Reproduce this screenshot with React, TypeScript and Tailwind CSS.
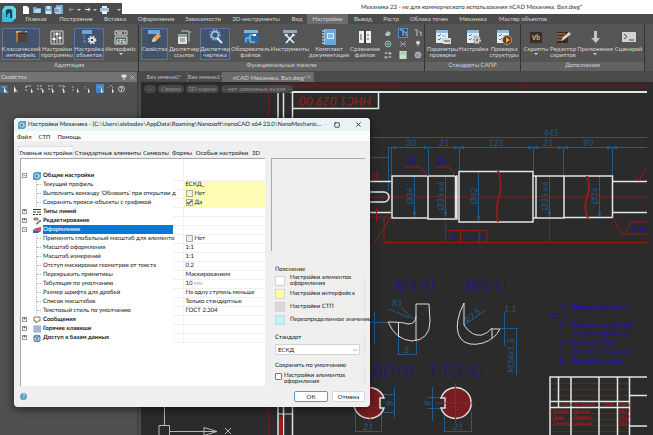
import { useState, type ReactNode } from "react";
import { Check, ChevronDown, Minus, Square, X } from "lucide-react";

const ribbonTabs: [string, string][] = [
  ["Главная", "w-[34px]"],
  ["Построение", "w-[46px]"],
  ["Вставка", "w-[32px]"],
  ["Оформление", "w-[50px]"],
  ["Зависимости", "w-[44px]"],
  ["3D-инструменты", "w-[62px]"],
  ["Вид", "w-[20px]"],
  ["Настройки", "w-[41px]"],
  ["Вывод", "w-[30px]"],
  ["Растр", "w-[26px]"],
  ["Облака точек", "w-[50px]"],
  ["Механика", "w-[38px]"],
  ["Мастер объектов", "w-[62px]"],
];

function Icon({ children }: { children: ReactNode }) {
  return (
    <svg viewBox="0 0 16 16" className="size-4 shrink-0" fill="none" aria-hidden="true">
      {children}
    </svg>
  );
}

const gear = (cx: number, cy: number, r: number, color: string) => (
  <>
    <circle cx={cx} cy={cy} r={r} stroke={color} strokeWidth="1.8" />
    <circle cx={cx} cy={cy} r={r + 1.5} stroke={color} strokeWidth="1.3" strokeDasharray="1.5 1.5" />
  </>
);

const checklist = (
  <>
    <path d="M1 1h12v13H1z" fill="#e4eaee" />
    <path d="M1 1h12v3H1z" fill="#8bbbe0" />
    <path d="M3 6l1 1 2-2M3 10l1 1 2-2" stroke="#3183bd" />
    <path d="M7 7h4M7 11h4" stroke="#9aa" />
  </>
);

const icons: Record<string, ReactNode> = {
  classic: (
    <>
      <path d="M3 2h11v11H3z" fill="#4f4339" />
      <path d="M3 2h11v2H3z" fill="#e3a469" />
      <path d="M3 4h2v9H3z" fill="#a87746" />
      <path d="M5 4h9M9 2v2M11 2v2" stroke="#2b2826" />
    </>
  ),
  sliders: (
    <>
      <path d="M2 2h12v13H2z" stroke="#d6d6d6" />
      <path d="M5 3v11M8 3v11M11 3v11" stroke="#e2e2e2" />
      <path d="M3.500 10h3M6.500 5h3M9.500 9h3" stroke="#fff" strokeWidth="2" />
    </>
  ),
  objects: (
    <>
      <path d="M1 1h10v4H1z" fill="#6fa5d8" />
      <path d="M3 6v7h3" stroke="#77aede" strokeDasharray="1.500 1" />
      {gear(11, 11, 2.2, "#e5e5e5")}
    </>
  ),
  cfg: (
    <>
      <path d="M2 2h12v4H2zM2 8h12v7H2z" stroke="#dedede" />
      <path d="M4 4h5M11 4h1" stroke="#fff" />
      <text x="8" y="14" textAnchor="middle" fontSize="5" fontWeight="bold" fill="#fff" fontFamily="Roboto, sans-serif">CFG</text>
    </>
  ),
  props: (
    <>
      <path d="M1 1h12v4H1z" fill="#6ea7dc" />
      <path d="M2 6v8h10V6" stroke="#35506f" />
      <path d="M5 13l1-4 5-5 3 3-5 5z" fill="#e7a25f" />
      <path d="M5 13l1-4 3 3z" fill="#f7d5a5" />
    </>
  ),
  links: (
    <>
      <path d="M2 5h9v10H2z" fill="#e2e3e0" />
      <path d="M5 2h8v11" stroke="#c3c7c4" />
      <path d="M2 5h9v3H2z" fill="#8fa7a0" />
      <path d="M4 10h5M4 12h5" stroke="#70797c" />
      <path d="M12 3h3" stroke="#76a879" strokeWidth="2" />
    </>
  ),
  manager: (
    <>
      {gear(8, 6, 3.5, "#8ac2f1")}
      <path d="M10 9l5 5" stroke="#d9eeff" strokeWidth="2" />
    </>
  ),
  explorer: (
    <>
      <path d="M1 1h14v14H1z" fill="#2b6ba3" />
      <path d="M1 1h14v3H1z" fill="#85b6d9" />
      <path d="M3 13V9h4V6h5M7 9v4h5" stroke="#a7d7f4" />
      <path d="M10 5h3v2h-3z" fill="#fff" />
    </>
  ),
  tools: (
    <>
      <path d="M1 1h14v14H1z" fill="#4b5863" />
      <path d="M1 1h14v3H1z" fill="#9aaab6" />
      <path d="M3 5l9 9M12 5l-8 9" stroke="#f2f2f2" strokeWidth="1.600" />
      <path d="M10 5l3 2M3 7l3-2" stroke="#f2f2f2" />
    </>
  ),
  docs: (
    <>
      <path d="M3 0h12v16H3z" fill="#66a9e0" />
      <path d="M6 4h7v6H6z" fill="#d8ebfa" />
      <path d="M7 6h5M7 8h5" stroke="#397db5" />
      <path d="M1 2h3M1 5h3M1 8h3M1 11h3M1 14h3" stroke="#f1f1f1" />
    </>
  ),
  compare: (
    <>
      <path d="M2 2h5v12H2zM9 2h5v12H9z" fill="#eee" />
      <path d="M4 5v6M11 5v2M11 9v2" stroke="#555" />
      <path d="M8 1v14" stroke="#292929" />
    </>
  ),
  params: (
    <>
      {checklist}
      <path d="M8 9h8v6H8z" fill="#dadada" />
      <path d="M9 12h6" stroke="#555" />
    </>
  ),
  check: (
    <>
      {checklist}
      <circle cx="11" cy="11" r="3.500" fill="#5b5e61" />
      {gear(11, 11, 2, "#c8cbce")}
    </>
  ),
  verify: (
    <>
      {checklist}
      <circle cx="11" cy="11" r="4.500" fill="#4b3b31" stroke="#e69251" />
      <path d="M10 8l4 3-4 3z" fill="#f4a45e" />
    </>
  ),
  vb: (
    <>
      <path d="M2 3h12v11H2z" fill="#382f27" />
      <text x="8" y="11" textAnchor="middle" fontSize="7" fontWeight="bold" fill="#d5a86a" fontFamily="Roboto, sans-serif">Vb</text>
    </>
  ),
  editor: (
    <>
      <path d="M2 3h11v11H2z" fill="#3a2d25" />
      <path d="M2 5h8M2 8h7M2 11h6" stroke="#bb8b60" />
      <path d="M6 12l2-4 6-5 2 2-6 5z" fill="#e9cfbb" />
    </>
  ),
  apps: <path d="M7 2h3v7h3l-4 5-5-5h3z" fill="#c6c6c6" />,
  console: (
    <>
      <path d="M1 3h14v10H1z" fill="#d1d1d1" />
      <path d="M3 5l3 2.500L3 10M8 11h5" stroke="#444" />
    </>
  ),
};

type Tool = { icon: string; label: string[]; width: string; active?: boolean; menu?: boolean };

const adaptation: Tool[] = [
  { icon: "classic", label: ["Классический", "интерфейс"], width: "w-[38px]", active: true },
  { icon: "sliders", label: ["Настройки", "программы"], width: "w-[34px]" },
  { icon: "objects", label: ["Настройка", "объектов"], width: "w-[30px]", active: true },
  { icon: "cfg", label: ["Интерфейс"], width: "w-[33px]", menu: true },
];
const panels: Tool[] = [
  { icon: "props", label: ["Свойства"], width: "w-[27px]", active: true },
  { icon: "links", label: ["Диспетчер", "ссылок"], width: "w-[32px]" },
  { icon: "manager", label: ["Диспетчер", "чертежа"], width: "w-[30px]", active: true },
  { icon: "explorer", label: ["Обозреватель", "файлов"], width: "w-[41px]" },
  { icon: "tools", label: ["Инструменты"], width: "w-[38px]" },
  { icon: "docs", label: ["Комплект", "документации"], width: "w-[40px]" },
  { icon: "compare", label: ["Сравнение", "файлов"], width: "w-[32px]" },
];
const standards: Tool[] = [
  { icon: "params", label: ["Параметры", "проверки"], width: "w-[31px]" },
  { icon: "check", label: ["Настройка"], width: "w-[31px]" },
  { icon: "verify", label: ["Проверка", "структуры"], width: "w-[30px]" },
];
const addons: Tool[] = [
  { icon: "vb", label: ["Скрипты"], width: "w-[26px]", menu: true },
  { icon: "editor", label: ["Редактор", "скриптов"], width: "w-[28px]" },
  { icon: "apps", label: ["Приложения"], width: "w-[36px]", menu: true },
  { icon: "console", label: ["Сценарий"], width: "w-[31px]" },
];

function ToolButton({ tool }: { tool: Tool }) {
  return (
    <button
      className={`flex h-8 shrink-0 flex-col items-center border text-[6px] leading-[6px] whitespace-nowrap ${tool.width} ${
        tool.active ? "border-[#5877a0] bg-[#43536b]" : "border-transparent"
      }`}
    >
      <Icon>{icons[tool.icon]}</Icon>
      <span className="mt-px flex flex-col items-center">
        {tool.label.map((line) => (
          <span key={line}>{line}</span>
        ))}
        {tool.menu && <span className="mt-px border-x-2 border-t-2 border-x-transparent border-t-[#d6d6d6]" />}
      </span>
    </button>
  );
}

function Group({ tools, title, width, children }: { tools: Tool[]; title: string; width: string; children?: ReactNode }) {
  return (
    <section className={`flex shrink-0 flex-col border-r border-[#343434] ${width}`}>
      <div className="flex h-[38px] items-start pt-1 pl-0.5">
        {tools.map((t) => (
          <ToolButton key={t.icon} tool={t} />
        ))}
        {children}
      </div>
      <h2 className="h-[9px] bg-[#626262] text-center text-[6px] leading-[8px]">{title}</h2>
    </section>
  );
}

const smallTools: ReactNode[] = [
  <path key="a" d="M1 5l3-3 3 2-2 3H2z" fill="#bebebe" />,
  <path key="b" d="M1 1h3v6M4 3h3v4" stroke="#8bc6f4" />,
  <path key="c" d="M1 1h3M3 2v5M5 3h2v4" stroke="#ccc" />,
  <path key="d" d="M1 4a3 3 0 106 0 3 3 0 10-6 0M4 1v6M1 4h6" stroke="#87b6a6" />,
  <path key="e" d="M1 7l6-6M1 1l6 6M1 4h6" stroke="#a48aaa" />,
  <path key="f" d="M2 3a2 2 0 114 0L4 5zM4 5v2" fill="#e5d7aa" stroke="#ccc" strokeWidth=".5" />,
  <path key="g" d="M1 3l1-2 1 2M5 1v2h2V2H5M1 5v2h2V5M5 5l1 2 1-2" stroke="#ddd" strokeWidth=".7" />,
  <path key="h" d="M1 0h6v8H1zM2 6l2-3 2 3z" fill="#9cc8aa" stroke="#e5eee7" />,
  <path key="i" d="M1 4a3 3 0 106 0 3 3 0 10-6 0M3 3h2v2" fill="#969696" stroke="#ccc" strokeWidth=".7" />,
];

function NanoLogo() {
  return (
    <svg viewBox="0 0 14 16" className="h-4 w-3.5 shrink-0" aria-hidden="true">
      <path d="M3 0h8l3 3v9l-4 4H0V4z" fill="#35bddd" />
      <path d="M3 0h8l3 3v9l-3 2V3H4L1 7V4z" fill="#68d6e6" />
      <path d="M4 11V6a3 3 0 016 0v6H8V6L5 9v2z" fill="#173f58" />
    </svg>
  );
}

function SettingsGlyph() {
  return (
    <svg viewBox="0 0 8 8" className="size-2 shrink-0" fill="none" aria-hidden="true">
      <path d="M2 0h6v6L6 8H0V2z" fill="#4fa3c6" />
      <circle cx="4" cy="4" r="2" fill="#2d7296" stroke="#e3f5fb" strokeWidth=".9" />
      <path d="M4 4h3" stroke="#e3f5fb" strokeWidth=".7" />
    </svg>
  );
}

function QuickAccess() {
  return (
    <svg viewBox="0 0 102 11" className="h-[11px] w-[102px]" fill="none" aria-hidden="true">
      <path d="M4 3h4l2 2v6H4z" fill="#fff" />
      <path d="M14 4h3l1 1h4v5h-8z" fill="#6fa6d8" />
      <path d="M16 6h6l-1 4h-6z" fill="#b2d4ee" />
      <path d="M26 3h7v8h-7z" fill="#7aa3ca" />
      <path d="M28 3h3v3h-3zM27 8h5v3h-5z" fill="#d3e5f1" />
      <path d="M37 2h7v9h-7z" fill="#73a3d0" />
      <path d="M36 5h5v5h-5zM39 6l3-3" stroke="#e0e7ed" />
      <path d="M55 6.500h-5m2-2l-2 2 2 2" stroke="#8797a5" />
      <path d="M58 6h4l-2 2zM74 6h4l-2 2zM98 6h4l-2 2z" fill="#c9c9c9" />
      <path d="M66 6.500h5m-2-2l2 2-2 2" stroke="#e5e5e5" />
      <path d="M81 5h9v4h-9z" fill="#9fc3e0" />
      <path d="M83 3h5v2h-5zM83 8h5v3h-5z" fill="#eee" />
    </svg>
  );
}

function PropertyTools() {
  return (
    <svg viewBox="0 0 136 12" className="h-3 w-[136px]" fill="none" aria-hidden="true">
      <path d="M0 2h8v8H0z" fill="#47698b" />
      <path d="M96 1h8v9h-8z" fill="#4b83ca" />
      <path d="M2 4h4M26 3h6M26 3v6M37 3h6M37 6h5M48 3h6M48 6h4M59 3h6l-3 4" stroke="#b5c9dc" strokeDasharray="2 1" />
      <path d="M73 3v5M84 3l3 3M98 4h4M108 5l3-3 2 3" stroke="#9aa8b4" strokeDasharray="2 1" />
      <path d="M4 4v6l2-1 2 2zM14 3v7l2-2 2 2zM31 5v5l2-1 1 2zM42 5v5l2-1zM52 5v5l2-1zM63 5v5l2-1zM77 5v5l2-1zM88 5v5l2-1zM101 4v6l2-1zM112 5v5l2-1z" fill="#e0e6ec" />
      <circle cx="121.500" cy="6" r="3" stroke="#bbb" />
      <path d="M120 5q1.500-2 3 0l-1.500 1v2" stroke="#ccc" />
    </svg>
  );
}

const blue = "#205b8c";
const navy = "#26168b";
const red = "#951b1d";

function Drawing() {
  return (
    <svg viewBox="141 82 512 353" className="block h-[353px] w-[512px]" fill="none" fontFamily="Lato, sans-serif" role="img" aria-label="Чертёж вала">
      <path d="M270 85.500H647" stroke="#482323" strokeWidth="5" />
      <path d="M268.500 435V86H397M526 83v9" stroke="#701e20" />
      <g stroke="#e4e4e4">
        <path d="M277 92H647" strokeWidth="2" />
        <path d="M278 92V435M283.500 92V435M292.500 92V435M292 108.500H378.500V92" strokeWidth="1.500" />
      </g>
      <text x="335" y="97" transform="rotate(180 335 97)" textAnchor="middle" fontSize="12" fontStyle="italic" fill="#a61d20">ННС1 029 00</text>
      <path d="M279 417h4v18h-4z" fill="#a11c20" />
      <path d="M278 414h14" stroke="#ddd" />

      <g stroke={blue}>
        <path d="M370 137.500H647M387 147.500H647M370 157.500H389" />
        <path d="M388.500 147v43M391.500 147v28M428.500 147v28M459.500 147v24M533.500 147v24M563.500 147v28M612.500 147v28" />
        <path d="M414.500 176v41M445.500 176v41M478.500 172v49M549.500 176v42M599.500 176v41" />
      </g>
      <path
        d="M392 147.500l4-1v2zM428 147.500l-4-1v2zM459 147.500l-5-1v2zM459 147.500l5-1v2zM533 147.500l-5-1v2zM533 147.500l5-1v2zM563 147.500l-5-1v2zM563 147.500l5-1v2zM612 147.500l-5-1v2zM612 147.500l5-1v2zM414.500 217l-1-5h2zM445.500 217l-1-5h2zM478.500 221l-1-5h2zM549.500 217l-1-5h2zM599.500 217l-1-5h2z"
        fill={blue}
        stroke={blue}
      />
      <g fill={blue} fontSize="9" fontStyle="italic" textAnchor="middle">
        <text x="551" y="136">445</text>
        <text x="411" y="146">30</text>
        <text x="444" y="146">25</text>
        <text x="496" y="146">125</text>
        <text x="548" y="146">25</text>
        <text x="588" y="146">90</text>
        <text transform="translate(413 196) rotate(-90)">Ø34</text>
        <text transform="translate(444 196) rotate(-90)">Ø35 к6</text>
        <text transform="translate(477 196) rotate(-90)">Ø42</text>
        <text transform="translate(548 196) rotate(-90)">Ø35 к6</text>
        <text transform="translate(598 196) rotate(-90)">Ø34</text>
      </g>

      <path d="M370 197H648" stroke="#811f21" />
      <g stroke="#e5e5e5" strokeWidth="1.500">
        <path d="M370 181.500h21M370 212.500h21M370 192h14a5 5 0 010 10h-14" />
        <path d="M392 176h36v42h-36zM428 176h29v43h-29zM459 171.500h74V222h-74zM455.500 175v43M536 176h28v42h-28zM564 176h48.500v41.500H564zM533 176h3M533 218h3M612 181.500h35M612 212.500h35" />
      </g>
      <path d="M498 171q5 13 1 26t-1 25M587 176q4 10 0 21t1 21" stroke={red} strokeWidth="2" />
      <g stroke={red}>
        <path d="M373 172v8m4-8v8m-5-4h7M376.500 208v14M370 217h21L371 248M384 217v25.500H647M445.500 220v22M549.500 220v22M447 230.500h40v12M460.500 231v11M479.500 231v11M613 217l8 17h26M625 234l6-12h16M404 167h16l8 9M436 167h13l7 9M635 177l4 4 7-14" />
      </g>
      <g fill={navy} fontStyle="italic">
        <text x="407" y="165" fontSize="13" fontWeight="bold">А</text>
        <text x="437" y="165" fontSize="13" fontWeight="bold">А</text>
        <text x="450" y="240" fontSize="8" fontWeight="bold">Ø</text>
        <text x="463" y="240" fontSize="7" fontWeight="bold">0,01</text>
        <text x="481" y="240" fontSize="8" fontWeight="bold">Б</text>
        <text x="631" y="231" fontSize="7" fontWeight="bold">Rz40</text>
        <text x="394" y="292" fontSize="16">Б(5:1)</text>
        <text x="465" y="292" fontSize="16">В(5:1)</text>
        <text x="371" y="376" fontSize="16">Д(1:1)</text>
        <text x="430" y="376" fontSize="16">Г-Г(1:1)</text>
      </g>

      <g stroke={blue}>
        <path d="M374.500 312v32M370 322.500h18M389 309l21 9M401 308l14 12M398.500 337v18M416.500 340v15M397 354.500h20M464 325l22-15M500 328.500h18M504.500 312v34M516.500 329v46M394.500 387v31M383 394.500h12M383 412.500h12M432.500 387v34M427 397.500h15M427 408.500h15M444.500 412v20M471.500 412v20M444 431.500h28M355.500 407v25M381.500 412v20M355 431.500h27" />
      </g>
      <g fill={blue} fontStyle="italic" fontSize="9">
        <text x="392" y="306">R1</text>
        <text x="404" y="353">3</text>
        <text transform="translate(468 324) rotate(-40)">R2,5</text>
        <text x="504" y="312">1,1</text>
        <text transform="translate(514 373) rotate(-90)">M36x1,5</text>
        <text transform="translate(393 406) rotate(-90)">8</text>
        <text transform="translate(431 406) rotate(-90)">8</text>
        <text x="453" y="430">21</text>
        <text x="363" y="430">21</text>
      </g>
      <g stroke="#dedede">
        <path d="M388 322q8 18 24 19 18-1 18-20l-1-17h-13v37M388 322q15 0 20 2 8 0 8-8M398.500 323v14" />
        <path d="M464 303l-4 9q-6 18 1 27 7 8 22 4 12-4 17-14h-8v9M464 303v22q8 12 18 10 6-2 10-7" />
      </g>
      <defs>
        <pattern id="hatch" width="3" height="3" patternUnits="userSpaceOnUse">
          <path d="M0 0h3v3H0z" fill="#641b1f" />
          <path d="M0 3L3 0" stroke="#a22125" />
        </pattern>
      </defs>
      <path d="M384 398a15.500 15.500 0 10 0 10h-4v-10z" fill="url(#hatch)" stroke="#ddd" strokeWidth="1.500" />
      <path d="M441 398a15.500 15.500 0 11 0 10h4v-10z" fill="url(#hatch)" stroke="#ddd" strokeWidth="1.500" />
      <path d="M455.500 383v40M436 403h38M370 383v40" stroke="#8d272a" />

      <g fill="#2412a0" fontSize="7" fontStyle="italic" fontWeight="bold">
        <text x="560" y="309">1.</text>
        <text x="571" y="309">Общие допуски по</text>
        <text x="547" y="318">ГОСТ</text>
        <text x="560" y="327">2.</text>
        <text x="571" y="327">Радиусы скруглений</text>
        <text x="560" y="336">3.</text>
        <text x="571" y="336">Острые кромки пр.</text>
        <text x="560" y="345">4.</text>
        <text x="571" y="345">H14, h14, IT14</text>
        <text x="560" y="354">5.</text>
        <text x="571" y="354">HB 230...260 кроме</text>
        <text x="560" y="363">6.</text>
        <text x="571" y="363">Термообработка</text>
      </g>
      <path d="M551 383.500h78M551 389.500h78M551 395.500h78M551 413.500h78M551 419.500h78M551 425.500h78M551 431.500h78" stroke="#741d20" />
      <path d="M550 435V377h97M558.500 377v30M571 377v58M599 377v58M617.500 377v58M629.500 377v58M550 401.500h79M550 407.500h79M629 395.500h18M629 426h18" stroke="#e5e5e5" strokeWidth="1.500" />
      <g fill="#b4161c" fontSize="5" fontStyle="italic" fontWeight="bold">
        <text x="560" y="406">Лист</text>
        <text x="574" y="406">№ докум.</text>
        <text x="602" y="406">Подп</text>
        <text x="618" y="406">Дата</text>
        <text x="552" y="413">Разраб.</text>
        <text x="573" y="413">Иванов</text>
        <text x="552" y="419">Пров.</text>
        <text x="573" y="419">Петров</text>
        <text x="552" y="425">Т.контр</text>
        <text x="573" y="425">Сидоров</text>
        <text x="618" y="413">2023</text>
        <text x="618" y="419">2023</text>
        <text x="618" y="425">2023</text>
      </g>
      <path d="M164.500 407v18M159 425.500h10.500V436H159zM170 431.500h47M204 427.500l13 4-13 4zM225 428l6 6M231 428l-6 6" stroke="#b9b9b9" />
    </svg>
  );
}

function Tick({ id, label, checked, white }: { id: string; label: string; checked?: boolean; white?: boolean }) {
  const [on, setOn] = useState(!!checked);
  return (
    <span className="flex items-start gap-0.5">
      <span className="grid shrink-0">
        <input
          id={id}
          type="checkbox"
          checked={on}
          onChange={() => setOn(!on)}
          className={`size-[7px] appearance-none border [grid-area:1/1] ${white ? "rounded-[1px] border-[#777] bg-white" : "border-[#aaa] bg-[#eee]"}`}
        />
        {on && <Check className="pointer-events-none size-[7px] text-[#555] [grid-area:1/1]" strokeWidth={4} />}
      </span>
      <label htmlFor={id}>{label}</label>
    </span>
  );
}

type Row = { text: string; icon?: string; open?: boolean; value?: ReactNode; yellow?: boolean; selected?: boolean };

const rows: Row[] = [
  { text: "Общие настройки", icon: "general", open: true },
  { text: "Текущий профиль", value: "ЕСКД_", yellow: true },
  { text: "Выполнить команду 'Обновить' при открытии д", value: <Tick id="refresh" label="Нет" />, yellow: true },
  { text: "Сохранять прокси-объекты с графикой", value: <Tick id="proxy" label="Да" checked />, yellow: true },
  { text: "Типы линий", icon: "lines" },
  { text: "Редактирование", icon: "edit" },
  { text: "Оформление", icon: "style", open: true, selected: true },
  { text: "Применять глобальный масштаб для элементо", value: <Tick id="global" label="Нет" /> },
  { text: "Масштаб оформления", value: "1:1" },
  { text: "Масштаб измерений", value: "1:1" },
  { text: "Отступ маскировки геометрии от текста", value: "0.2" },
  { text: "Перекрывать примитивы", value: "Маскированием" },
  { text: "Табуляция по умолчанию", value: <>10 <span className="text-[#aaa]">мм</span></> },
  { text: "Размер шрифта для дробей", value: "На одну ступень меньше" },
  { text: "Список масштабов", value: "Только стандартные" },
  { text: "Текстовый стиль по умолчанию", value: "ГОСТ 2.304" },
  { text: "Сообщения", icon: "messages" },
  { text: "Горячие клавиши", icon: "keys" },
  { text: "Доступ к базам данных", icon: "data" },
];

function TreeIcon({ name }: { name: string }) {
  if (name === "general") return <SettingsGlyph />;
  return (
    <svg viewBox="0 0 8 8" className="size-2 shrink-0" fill="none" aria-hidden="true">
      {name === "lines" && <path d="M0 1.500h8M0 4h3m1 0h4M0 6.500h2m1 0h2m1 0h2" stroke="#333" />}
      {name === "edit" && <path d="M1 1h4v2H1zM3 7l4-4 1 1-4 3z" fill="#c9b74a" stroke="#5a4a9a" strokeWidth=".7" />}
      {name === "style" && (
        <>
          <path d="M0 4l3-2 5-1v3L4 5z" fill="#d0505a" />
          <path d="M0 4l4 1 4-1v1L5 7H0z" fill="#3e5ba5" />
        </>
      )}
      {name === "messages" && <path d="M1 1h6v4H5L3 7V5H1z" fill="#fffbd2" stroke="#65604a" strokeWidth=".8" />}
      {name === "keys" && <path d="M1 1h7v6H1zM2 3h5M2 5h5" fill="#c3d5ed" stroke="#748daf" strokeWidth=".8" />}
      {name === "data" && <path d="M1 2l3-1 3 1v5l-3 1-3-1zM1 2l3 1 3-1M4 3v5" fill="#a8caea" stroke="#40658e" strokeWidth=".8" />}
    </svg>
  );
}

function SettingsTree() {
  return (
    <div className="min-w-0 flex-1 border-t border-l border-[#a5a5a5] bg-white">
      <table className="w-full table-fixed border-collapse">
        <colgroup>
          <col className="w-[152px]" />
          <col className="w-[10px]" />
          <col />
        </colgroup>
        <tbody>
          <tr className="h-3">
            <td />
            <td className="border-r border-[#eee]" />
            <td />
          </tr>
          {rows.map((r) => (
            <tr key={r.text} className="h-[9px]">
              <td className="p-0">
                {r.icon ? (
                  <div className="flex h-[9px] items-center">
                    <button
                      aria-label={r.text}
                      className="mr-[6px] ml-px flex size-[5px] items-center justify-center border border-[#999] text-[5px] leading-[3px]"
                    >
                      {r.open ? "−" : "+"}
                    </button>
                    <TreeIcon name={r.icon} />
                    <span className={`ml-0.5 h-[9px] flex-1 font-bold ${r.selected ? "bg-[#0b77d1] text-[#dcefff]" : ""}`}>{r.text}</span>
                  </div>
                ) : (
                  <div className="ml-[15px] flex h-[9px] items-center border-l border-dotted border-[#bbb]">
                    <span className="mr-0.5 w-1 shrink-0 border-t border-dotted border-[#bbb]" />
                    <span className="whitespace-nowrap">{r.text}</span>
                  </div>
                )}
              </td>
              <td className="border-r border-b border-[#f0f0f0] p-0" />
              <td className={`border-b p-0 pl-0.5 whitespace-nowrap ${r.yellow ? "border-[#fbfbb8] bg-[#fdfdb6]" : "border-[#f0f0f0]"}`}>
                <div className="h-2 leading-[8px]">{r.value}</div>
              </td>
            </tr>
          ))}
        </tbody>
      </table>
    </div>
  );
}

const legend: [string, string][] = [
  ["Настройки элементов оформления", "bg-white"],
  ["Настройки интерфейса", "bg-[#fdfda8]"],
  ["Настройки СТП", "bg-[#dcd7da]"],
  ["Переопределенное значение", "bg-[#b4fbfd]"],
];

function SettingsDialog() {
  return (
    <div
      role="dialog"
      aria-label="Настройки Механика"
      className="absolute top-[118px] left-[14px] flex h-[289px] w-[356px] flex-col overflow-hidden rounded-[4px] bg-[#efefef] text-[6px] leading-[9px] text-[#202020] shadow-[0_2px_10px_rgba(0,0,0,0.6)]"
    >
      <header className="flex h-[13px] shrink-0 items-center bg-[#e9f3f6] pl-1">
        <SettingsGlyph />
        <h1 className="ml-0.5 flex-1 whitespace-nowrap">Настройки Механика - [C:\Users\alebedev\AppData\Roaming\Nanosoft\nanoCAD x64 23.0\NanoMechanic...</h1>
        <div className="flex shrink-0 items-center pr-2">
          <button aria-label="Свернуть"><Minus className="size-[5px] text-[#bbb]" /></button>
          <button aria-label="Развернуть" className="mr-[15px] ml-1.5"><Square className="size-[6px]" strokeWidth={3} /></button>
          <button aria-label="Закрыть"><X className="size-[7px]" strokeWidth={3} /></button>
        </div>
      </header>
      <nav className="flex h-[10px] shrink-0 items-center gap-[7px] bg-[#fbfcfc] pl-[3px]">
        <button>Файл</button>
        <button>СТП</button>
        <button>Помощь</button>
      </nav>
      <div role="tablist" className="mt-[5px] flex h-3 shrink-0 items-center pl-1 whitespace-nowrap">
        <button role="tab" aria-selected="true" className="h-3 w-[56px] border-x border-t border-[#dedede] bg-[#fafafa]">Главные настройки</button>
        <button role="tab" className="w-[68px]">Стандартные элементы</button>
        <button role="tab" className="w-[28px]">Символы</button>
        <button role="tab" className="w-[24px]">Формы</button>
        <button role="tab" className="w-[56px]">Особые настройки</button>
        <button role="tab" className="w-[12px]">3D</button>
      </div>
      <div className="flex min-h-0 flex-1 gap-[6px] pr-[5px] pl-[6px]">
        <SettingsTree />
        <aside className="flex w-[94px] shrink-0 flex-col">
          <div className="h-[93px] border-t border-l border-[#aaa]" />
          <section className="mt-[14px] flex flex-col pl-1">
            <h3 className="h-[9px]">Пояснение</h3>
            <ul className="flex flex-col gap-[3px] border-r border-[#e2e2e2] pt-0.5">
              {legend.map(([text, color]) => (
                <li key={text} className="flex h-[10px] items-center gap-[5px] leading-[6px]">
                  <span className={`size-[10px] shrink-0 border border-[#d3d3d3] ${color}`} />
                  <span className={text.startsWith("Переопр") ? "whitespace-nowrap" : "w-[74px]"}>{text}</span>
                </li>
              ))}
            </ul>
          </section>
          <div className="mt-2 flex flex-col gap-0.5 border-r border-[#e2e2e2] pr-1 pl-1">
            <label htmlFor="standard">Стандарт</label>
            <div className="grid items-center">
              <select id="standard" className="h-[11px] w-full appearance-none rounded-[1px] border border-[#d2d2d2] bg-white pl-0.5 leading-[9px] [grid-area:1/1]">
                <option>ЕСКД</option>
              </select>
              <ChevronDown className="pointer-events-none mr-0.5 size-[6px] justify-self-end text-[#666] [grid-area:1/1]" />
            </div>
          </div>
          <div className="mt-2 flex flex-col gap-1 border-r border-[#e2e2e2] pl-1 leading-[6px]">
            <h3>Сохранить по умолчанию</h3>
            <div className="w-[74px]">
              <Tick id="save-style" label="Настройки элементов оформления" white />
            </div>
          </div>
        </aside>
      </div>
      <footer className="flex h-[21px] shrink-0 items-center gap-1 pr-[5px] pl-[6px]">
        <button aria-label="Справка" className="mr-auto flex size-[7px] items-center justify-center rounded-full bg-[#5ba5c6] text-[5px] text-white">?</button>
        <button className="h-[11px] w-[34px] rounded-[2px] border border-[#5c97d2] bg-white">ОК</button>
        <button className="h-[11px] w-[33px] rounded-[2px] border border-[#d5d5d5] bg-white">Отмена</button>
      </footer>
    </div>
  );
}

export default function App() {
  return (
    <main className="relative flex h-screen w-full flex-col overflow-hidden bg-[#4a4a4a] font-[Lato,sans-serif] text-[6px] leading-[8px] text-[#d5d5d5] [text-rendering:geometricPrecision]">
      <div className="flex shrink-0 bg-[#4b4b4b]">
        <div className="flex w-[19px] shrink-0 items-end border-t-[3px] border-white pb-0.5 pl-0.5">
          <NanoLogo />
        </div>
        <div className="min-w-0 flex-1">
          <div className="flex h-[14px] bg-white">
            <div className="mt-[3px] w-[103px] shrink-0 bg-[#4b4b4b]">
              <QuickAccess />
            </div>
            <h1 className="flex-1 truncate pl-[239px] leading-[15px] text-[#303030]">
              Механика 23 - не для коммерческого использования nCAD Механика. Вал.dwg*
            </h1>
          </div>
          <nav className="flex h-[10px] whitespace-nowrap">
            {ribbonTabs.map(([name, width]) => (
              <button key={name} className={`h-[10px] shrink-0 leading-[10px] ${width} ${name === "Настройки" ? "bg-[#6c6c6c]" : ""}`}>
                {name}
              </button>
            ))}
          </nav>
        </div>
      </div>
      <div className="flex h-[47px] shrink-0 bg-[#555]">
        <Group tools={adaptation} title="Адаптация" width="w-[139px]" />
        <Group tools={panels} title="Функциональные панели" width="w-[286px]">
          <div className="grid grid-cols-3 gap-x-[5px] gap-y-px pl-0.5">
            {smallTools.map((s, i) => (
              <button key={i} aria-label={`Панель ${i + 1}`} className={i === 1 ? "border border-[#4e92ca] bg-[#354d63]" : "border border-transparent"}>
                <svg viewBox="0 0 8 8" className="size-2" fill="none">{s}</svg>
              </button>
            ))}
          </div>
        </Group>
        <Group tools={standards} title="Стандарты САПР" width="w-[96px]" />
        <Group tools={addons} title="Дополнения" width="w-[124px]" />
      </div>
      <div className="flex min-h-0 flex-1">
        <aside className="flex w-[138px] shrink-0 flex-col border-r border-[#3b3b3b] bg-[#505050]">
          <header className="mt-px flex h-[10px] items-center bg-[#747474] px-px">
            <h2 className="flex-1 leading-[9px]">Свойства</h2>
            <svg viewBox="0 0 6 6" className="mr-0.5 size-[6px]" aria-hidden="true"><path d="M1 1h4v2H1zM3 3v3" fill="#ddd" stroke="#ddd" /></svg>
            <button aria-label="Закрыть"><X className="size-[7px]" /></button>
          </header>
          <div className="pt-px"><PropertyTools /></div>
        </aside>
        <div className="ml-[3px] flex min-w-0 flex-1 flex-col">
          <nav className="flex h-[11px] shrink-0 items-end whitespace-nowrap">
            <button className="w-[47px] border-r border-[#666] leading-[10px] text-[#bbb]">Без имени0*</button>
            <button className="w-[34px] leading-[10px] text-[#bbb]">Без имени1*</button>
            <button className="flex h-[10px] w-[92px] items-center justify-between bg-[#6b6b6b] pr-0.5 pl-[11px] leading-[9px]">
              nCAD Механика. Вал.dwg*
              <X className="size-[6px]" />
            </button>
          </nav>
          <div className="relative min-h-0 flex-1 overflow-hidden bg-[#2b2b2b]">
            <Drawing />
            <div className="absolute top-[3px] left-[3px] flex gap-0.5 leading-[8px] text-[#929292]">
              <button className="w-3 rounded-full bg-[#474747]">−</button>
              <button className="w-[26px] rounded-full bg-[#474747]">Сверху</button>
              <button className="w-[33px] rounded-full bg-[#474747]">2D-каркас</button>
              <button className="w-[72px] rounded-full bg-[#474747] whitespace-nowrap">-- нет связанных видов --</button>
            </div>
          </div>
        </div>
      </div>
      <SettingsDialog />
    </main>
  );
}
